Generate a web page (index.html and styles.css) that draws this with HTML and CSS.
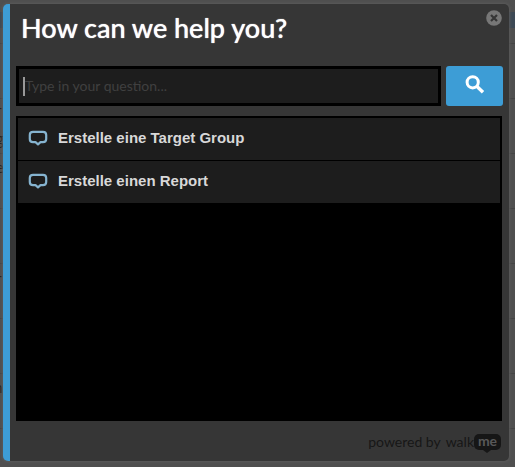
FILE: index.html
```html
<!DOCTYPE html>
<html lang="en">
<head>
<meta charset="utf-8">
<title>How can we help you?</title>
<link rel="stylesheet" href="styles.css">
</head>
<body>
<div class="backdrop" aria-hidden="true">
  <span class="band"></span>
  <span class="scrap scrap-1">r</span>
  <span class="scrap scrap-2">g</span>
  <span class="scrap scrap-3">e</span>
  <span class="scrap scrap-4">r</span>
  <span class="scrap scrap-5">n</span>
</div>
<main class="panel">
  <button class="close" type="button" aria-label="Close">
    <svg viewBox="0 0 16 16" width="16" height="16"><circle cx="8" cy="8" r="7.800" fill="#777"/><path d="M5 5l6 6M11 5l-6 6" stroke="#363636" stroke-width="2.2"/></svg>
  </button>
  <h1 class="title">How can we help you?</h1>
  <form class="search">
    <div class="field">
      <span class="caret"></span>
      <input class="input" type="text" aria-label="Question" placeholder="Type in your question...">
    </div>
    <button class="go" type="button" aria-label="Search">
      <svg viewBox="0 0 20 20" width="20" height="20"><circle cx="7.7" cy="7.3" r="5.6" fill="none" stroke="#fff" stroke-width="3"/><path d="M12 11.600l6 5.600" stroke="#fff" stroke-width="3.400"/></svg>
    </button>
  </form>
  <ul class="results">
    <li><a class="result" href="#">
      <svg class="bubble" viewBox="0 0 20 16" width="20" height="16"><path d="M5 1.800h10q3.200 0 3.200 3.200v4q0 3.200-3.200 3.200h-2.500L10 14.300l-2.500-2.100H5Q1.800 12.200 1.800 9V5Q1.800 1.800 5 1.800z" fill="none" stroke="#86b4d0" stroke-width="2.200" stroke-linejoin="round"/></svg>
      <span>Erstelle eine Target Group</span></a></li>
    <li><a class="result" href="#">
      <svg class="bubble" viewBox="0 0 20 16" width="20" height="16"><path d="M5 1.800h10q3.200 0 3.200 3.200v4q0 3.200-3.200 3.200h-2.500L10 14.300l-2.500-2.100H5Q1.800 12.200 1.800 9V5Q1.800 1.800 5 1.800z" fill="none" stroke="#86b4d0" stroke-width="2.200" stroke-linejoin="round"/></svg>
      <span>Erstelle einen Report</span></a></li>
  </ul>
  <footer class="footer">
    <span>powered by</span>
    <span class="brand">walk<span class="me">me</span></span>
  </footer>
</main>
</body>
</html>
```
FILE: styles.css
```css
* { box-sizing: border-box; }
body {
  margin: 0;
  min-height: 100vh;
  padding: 4px 6px 6px 3px;
  display: flex;
  background: #4d4d4d;
  font-family: Lato, sans-serif;
}
.backdrop {
  position: absolute;
  inset: 0;
  z-index: -1;
  overflow: hidden;
  color: #1c1c1c;
  font: 14px/16px "Open Sans", sans-serif;
  background: repeating-linear-gradient(#4f4f4f 0 54px, #444 54px 55px) 0 -11px / 100% 600px;
}
.band { position: absolute; top: 12px; left: 0; right: 0; height: 16px; background: #3d4955; }
.scrap { position: absolute; left: -4px; }
.scrap-1 { top: 103px; }
.scrap-2 { top: 131px; }
.scrap-3 { top: 160px; }
.scrap-4 { top: 271px; }
.scrap-5 { top: 380px; left: -6px; }
.panel {
  position: relative;
  flex: 1;
  display: flex;
  flex-direction: column;
  padding: 0 6px;
  background: #363636;
  border-left: 7px solid #3d9dd6;
  border-radius: 5px;
  box-shadow: 0 0 3px 1px #5a5a5a;
}
.close { position: absolute; top: 6px; right: 7px; padding: 0; border: 0; background: none; line-height: 0; }
.title { margin: 0; padding: 6px 5px; height: 62px; color: #fff; font-size: 27px; line-height: 36px; font-weight: 500; text-shadow: 0 0 1px #fff; }
.search { display: flex; gap: 5px; margin: 0 0 10px; height: 40px; }
.field { flex: 1; display: flex; align-items: center; padding-left: 4px; background: #1d1d1d; border: 3px solid #000; }
.caret { width: 2px; height: 19px; background: #999; }
.input { flex: 1; min-width: 0; padding: 0; border: 0; outline: 0; background: none; color: #ddd; font: 14px/20px Lato, sans-serif; }
.input::placeholder { color: #404040; opacity: 1; }
.go { width: 57px; padding: 0 0 2px; border: 0; border-radius: 3px; background: #3d9dd6; display: flex; align-items: center; justify-content: center; }
.results { flex: 1; margin: 0 1px 0 0; padding: 0; list-style: none; background: #000; border: 2px solid #000; }
.results li { margin-bottom: 1px; }
.result { display: flex; align-items: center; gap: 10px; height: 42px; padding: 0 10px 2px; background: #1d1d1d; color: #d8d8d8; text-decoration: none; font: bold 15px/20px "Liberation Sans", Arial, sans-serif; }
.bubble { flex: none; }
.footer { display: flex; justify-content: flex-end; gap: 5px; height: 40px; padding: 2px 2px 0 0; align-items: center; color: #171717; font-size: 14px; line-height: 20px; }
.brand { display: flex; }
.me { position: relative; width: 27px; height: 16px; margin-top: 2px; border-radius: 5px; background: #161616; color: #585858; text-align: center; font-weight: 700; line-height: 13px; }
.me::after { content: ""; position: absolute; left: 9px; top: 16px; border: 4px solid transparent; border-top: 3px solid #161616; border-bottom: 0; }
```
